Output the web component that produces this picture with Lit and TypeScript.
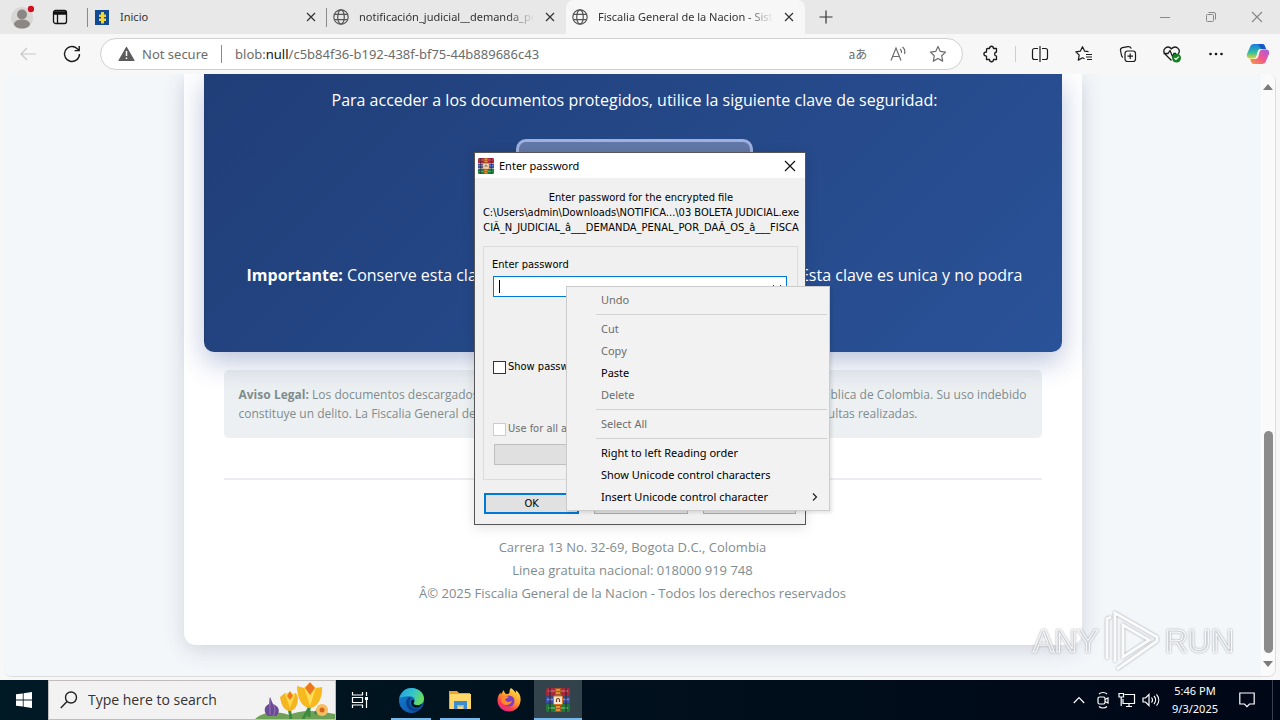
import { LitElement, html, css, svg } from "lit";
import { customElement } from "lit/decorators.js";

const closeIcon = html`<svg width="16" height="16" viewBox="0 0 16 16" fill="none" stroke="currentColor" stroke-width="1.2"><path d="M4 4l8 8M12 4l-8 8"/></svg>`;
const globeIcon = html`<svg width="16" height="16" viewBox="0 0 16 16" fill="none" stroke="#555" stroke-width="1.2"><circle cx="8" cy="8" r="7.2"/><ellipse cx="8" cy="8" rx="3.3" ry="7.2"/><path d="M1.5 5.3h13M1.5 10.7h13"/></svg>`;
const winrarShapes = svg`
  <path d="M1 0h22l1 2v5l-1 1H1L0 7V2z" fill="#a8283c"/><path d="M2 3h20" stroke="#d9606c" stroke-width="1.500"/>
  <path d="M0 8.500h24v7H0z" fill="#3b4fa8"/><path d="M1 11.500h22" stroke="#7f93d8" stroke-width="1.500"/>
  <path d="M1 16h22l1 1v5l-1 2H1l-1-2v-5z" fill="#1d7a38"/><path d="M2 20h20" stroke="#5cb85f" stroke-width="1.500"/>
  <path d="M4 0v24M20 0v24" stroke="#2c2430" stroke-width="1"/>
  <rect x="9" y="0" width="6" height="24" fill="#a85a22"/><path d="M10 2h4M10 5h4M10 19h4M10 22h4" stroke="#f0a83b" stroke-width="1.600"/>
  <rect x="7.500" y="8" width="9" height="8.500" rx="1" fill="#f4e9d8" stroke="#d9701c" stroke-width="1"/><path d="M10.500 14v-2a1.500 1.500 0 0 1 3 0v2" fill="none" stroke="#7a3a18" stroke-width="1.200"/>`;
const winrar = (s: number) => html`<svg width=${s} height=${s} viewBox="0 0 24 24">${winrarShapes}</svg>`;

@customElement("browser-tabs")
class BrowserTabs extends LitElement {
  static styles = css`
    :host { display: flex; height: 34px; background: #e8e8e8; color: #333; font: 11px/16px "Noto Sans", "Open Sans", sans-serif; }
    button { border: 0; padding: 0; background: none; font: inherit; color: inherit; display: grid; place-items: center; }
    svg { display: block; }
    .lead { flex: 0 0 88px; display: flex; align-items: center; padding-left: 10px; gap: 18px; box-sizing: border-box; border-right: 1px solid transparent; }
    .tab { flex: 0 1 239px; min-width: 60px; box-sizing: border-box; display: flex; align-items: center; gap: 10px; padding: 0 8px 0 6px; position: relative; }
    .ruled::before { content: ""; position: absolute; left: -1px; top: 8px; height: 19px; width: 1px; background: #8b8b8b; }
    .active { background: #f7f7f7; border-radius: 8px 8px 0 0; }
    .label { flex: 1; overflow: hidden; white-space: nowrap; margin-right: -4px; }
    .faded { mask-image: linear-gradient(90deg, #000 84%, transparent 99%); }
    .add { width: 42px; }
    .spacer { flex: 1; }
    .win { width: 46px; color: #888; }
  `;
  render() {
    return html`
      <div class="lead">
        <button aria-label="Profile"><svg width="24" height="26" viewBox="0 0 24 26"><circle cx="12" cy="14" r="11" fill="#d9d7d5"/><circle cx="12" cy="10.500" r="5" fill="#8b8785"/><ellipse cx="12" cy="20" rx="8" ry="4.500" fill="#8b8785"/><circle cx="21" cy="5" r="3.200" fill="#d10f20"/></svg></button>
        <button aria-label="Tab actions"><svg width="16" height="16" viewBox="0 0 16 16" fill="none" stroke="#111" stroke-width="1.300"><rect x="1.500" y="1.500" width="13" height="13" rx="2"/><path d="M2 4h12" stroke-width="3.500"/><path d="M5.500 5v9"/></svg></button>
      </div>
      <div class="tab ruled">
        <svg width="16" height="16" viewBox="0 0 16 16"><rect x="1" y="1" width="14" height="15" fill="#114a94"/><path d="M7 3h3v2.500h2V8h-2v1.500h2V12h-2v2.500H7V12H5V9.500h2V8H5V5.500h2z" fill="#f1d335"/></svg>
        <span class="label">Inicio</span><button aria-label="Close Inicio">${closeIcon}</button>
      </div>
      <div class="tab ruled">${globeIcon}<span class="label faded">notificación_judicial__demanda_penal</span><button aria-label="Close tab">${closeIcon}</button></div>
      <div class="tab active">${globeIcon}<span class="label faded">Fiscalia General de la Nacion - Sistema</span><button aria-label="Close tab">${closeIcon}</button></div>
      <button class="add" aria-label="New tab"><svg width="16" height="16" viewBox="0 0 16 16" stroke="#333" stroke-width="1.200"><path d="M8 1.500v13M1.500 8h13"/></svg></button>
      <span class="spacer"></span>
      <button class="win" aria-label="Minimize"><svg width="12" height="12" viewBox="0 0 12 12" stroke="currentColor"><path d="M1 6.500h10"/></svg></button>
      <button class="win" aria-label="Restore"><svg width="12" height="12" viewBox="0 0 12 12" fill="none" stroke="currentColor"><rect x="1.500" y="3.500" width="7" height="7" rx="1"/><path d="M3.500 1.500H9a1.500 1.500 0 0 1 1.500 1.500v5.500"/></svg></button>
      <button class="win" aria-label="Close"><svg width="12" height="12" viewBox="0 0 12 12" stroke="currentColor" stroke-width="1.200"><path d="M1 1l10 10M11 1L1 11"/></svg></button>
    `;
  }
}

@customElement("browser-toolbar")
class BrowserToolbar extends LitElement {
  static styles = css`
    :host { display: flex; align-items: center; height: 40px; background: #f7f7f7; color: #1b1b1b; font: 13px/20px "Noto Sans", "Open Sans", sans-serif; padding: 0 2px 0 6px; }
    button { border: 0; padding: 0; background: none; color: inherit; font: inherit; display: grid; place-items: center; width: 44px; height: 32px; flex: none; }
    svg { display: block; fill: none; stroke: currentColor; stroke-width: 1.200; }
    .pill { flex: 1; display: flex; align-items: center; margin-left: 6px; height: 32px; box-sizing: border-box; border: 1px solid #d0d0d0; border-radius: 16px; background: #fff; padding: 0 4px 0 17px; color: #6c6c6c; }
    .pill button { width: 40px; }
    .status { margin-left: 7px; }
    .rule { width: 1px; height: 18px; background: #8b8b8b; margin: 0 13px; }
    .url { flex: 1; white-space: nowrap; overflow: hidden; }
    .url b { font-weight: 400; color: #111; }
    .puzzle { width: 48px; margin-left: 4px; }
    .thin { width: 1px; height: 16px; background: #cfcfcf; margin-right: 2px; }
    .aa { font: 12px/16px "Noto Sans CJK JP", sans-serif; }
    .back { color: #c8c8c8; }
    .copilot { width: 40px; }
  `;
  render() {
    return html`
      <button class="back" aria-label="Back"><svg width="18" height="18" viewBox="0 0 18 18"><path d="M17 9H2M8 3L2 9l6 6"/></svg></button>
      <button aria-label="Refresh"><svg width="20" height="20" viewBox="0 0 20 20"><path d="M17.500 10A7.500 7.500 0 1 1 15 4.400l2 2M17.200 2v4.600h-4.600" stroke-width="1.400"/></svg></button>
      <div class="pill">
        <svg width="17" height="16" viewBox="0 0 17 16"><path d="M8.500 1.500L16 14.500H1z" fill="#5c5c5c" stroke="#5c5c5c" stroke-linejoin="round"/><path d="M8.500 5v5M8.500 11.500v1.500" stroke="#fff" stroke-width="1.500"/></svg>
        <span class="status">Not secure</span><span class="rule"></span>
        <span class="url">blob:<b>null</b>/c5b84f36-b192-438f-bf75-44b889686c43</span>
        <button class="aa" aria-label="Translate">aあ</button>
        <button aria-label="Read aloud"><svg width="18" height="18" viewBox="0 0 18 18"><path d="M2 15.500L7 3l5 12.500M3.800 11.500h6.500M11 4c1.500 1 1.800 2.500 1.500 4M13.500 2c2.200 1.800 2.700 4.500 2 7"/></svg></button>
        <button aria-label="Add to favorites"><svg width="18" height="18" viewBox="0 0 18 18"><path d="M9 1.500l2.300 4.900 5.300.7-3.900 3.700 1 5.300L9 13.500l-4.700 2.600 1-5.300L1.400 7.100l5.300-.7z" stroke-linejoin="round"/></svg></button>
      </div>
      <button class="puzzle" aria-label="Extensions"><svg width="18" height="18" viewBox="0 0 18 18"><path d="M5.500 3.500H7.500c0-3 4-3 4 0H14.500v3.500c-2.500.2-2.500 4 0 4.200v3.300h-3c0 3-4 3-4 0H4.500v-3.300c-3.500 0-3.500-4.200 0-4.200V4.500c0-.6.400-1 1-1z" stroke-linejoin="round" stroke-width="1.300"/></svg></button>
      <span class="thin"></span>
      <button aria-label="Split screen"><svg width="18" height="18" viewBox="0 0 18 18"><path d="M7 3.500H3.500a2 2 0 0 0-2 2v7a2 2 0 0 0 2 2H7M11 3.500h3.500a2 2 0 0 1 2 2v7a2 2 0 0 1-2 2H11M9 1v16"/></svg></button>
      <button aria-label="Favorites"><svg width="18" height="18" viewBox="0 0 18 18"><path d="M13.500 6.700L9.700 6.200 7.500 1.700 5.300 6.200l-4.500.6 3.400 3.300-.9 5 4.200-2.300 2 1M11 9.500h6M11 12h6M12 14.500h5" stroke-linejoin="round"/></svg></button>
      <button aria-label="Collections"><svg width="18" height="18" viewBox="0 0 18 18"><rect x="6" y="6" width="10.500" height="10.500" rx="2.500"/><path d="M11.200 8.500v5.500M8.500 11.200H14M4 12.500C2.500 12 2.500 10.500 2.200 9L1.500 5.500C1.200 3.800 2 3 3.500 2.700L9 1.700c1.800-.3 2.900.3 3.300 2"/></svg></button>
      <button aria-label="Browser essentials"><svg width="20" height="18" viewBox="0 0 20 18"><path d="M9.500 15.500L3 9C-.5 4.500 5.500-.5 9.500 3.800c4-4.300 10 .5 6.800 5M1.500 8.500H6l2-3 2.500 6L12 8.500h2" stroke-width="1.300"/><circle cx="14.500" cy="13" r="4.500" fill="#168021" stroke="none"/><path d="M12.500 13l1.500 1.500 2.700-2.800" stroke="#fff"/></svg></button>
      <button aria-label="Settings and more"><svg width="16" height="16" viewBox="0 0 16 16"><g fill="#111" stroke="none"><circle cx="2.500" cy="8" r="1.300"/><circle cx="8" cy="8" r="1.300"/><circle cx="13.500" cy="8" r="1.300"/></g></svg></button>
      <button class="copilot" aria-label="Copilot"><svg width="24" height="24" viewBox="0 0 24 24" stroke="none"><defs><linearGradient id="a" x1="0" y1="0" x2="0" y2="1"><stop stop-color="#1a7be0"/><stop offset=".6" stop-color="#35bfa0"/><stop offset="1" stop-color="#e8d52a"/></linearGradient><linearGradient id="b" x1="1" y1="0" x2="0" y2="1"><stop stop-color="#a35bea"/><stop offset=".5" stop-color="#f0588d"/><stop offset="1" stop-color="#f79a3c"/></linearGradient></defs><g stroke="none"><path d="M8 2h8c2 0 2.500 1 3 2.500L20 7h-5c-2 0-3 1-3.500 3l-1 4c-.5 1.500-1.500 2.500-3 2.500H4c-3 0-3.500-2.500-3-4.500L4 5c.6-2 2-3 4-3z" fill="url(#a)"/><path d="M16 22H8c-2 0-2.500-1-3-2.500L4.300 17H9c2 0 3-1 3.500-3l1-4c.5-1.500 1.500-2.500 3-2.500H20c3 0 3.500 2.500 3 4.500l-3 7c-.6 2-2 3-4 3z" fill="url(#b)"/><path d="M12 2h4c2 0 2.500 1 3 2.500L20 7h-5z" fill="#1659c7"/></g></svg></button>
    `;
  }
}

@customElement("judicial-page")
class JudicialPage extends LitElement {
  static styles = css`
    :host { flex: 1; min-height: 0; display: flex; isolation: isolate; margin: 0 4px 3px; border: 1px solid #dcdcdc; border-width: 0 1px 1px 0; border-radius: 8px; overflow: hidden; background: #f4f7fa; font: 16px/24px "Open Sans", "Noto Sans", sans-serif; }
    .scroll { flex: 1; min-width: 0; overflow: hidden; background: #f4f7fa; }
    .sheet { max-width: 898px; margin: 0 auto; box-sizing: border-box; background: #fff; border-radius: 0 0 12px 12px; padding: 0 20px 40px; box-shadow: 0 5px 22px rgba(30, 40, 70, .16); color: #7f8c8d; }
    .key { position: relative; z-index: 1; height: 278px; box-sizing: border-box; background: linear-gradient(135deg, #203e78, #2a5298); color: #fff; border-radius: 0 0 10px 10px; border-left: 1px solid #1e3c72; box-shadow: 0 10px 28px rgba(30, 60, 140, .3); text-align: center; padding: 14px 0 0 3px; }
    p { margin: 0; }
    .code { width: 237px; height: 66px; margin: 27px auto 58px; box-sizing: border-box; border: 3px solid #9fb0de; border-radius: 10px; background: #6278a8; }
    .note { display: flex; justify-content: space-between; padding: 0 39px; white-space: nowrap; }
    .legal { margin: 18px 20px 40px; background: #edf0f2; border-radius: 5px; padding: 15px; font-size: 12px; line-height: 19px; }
    .legal .full { text-align-last: justify; white-space: nowrap; }
    .legal .part { display: flex; justify-content: space-between; padding-right: 109px; white-space: nowrap; }
    .foot { margin: 0 20px; border-top: 2px solid #ecedf0; padding-top: 56px; text-align: center; font-size: 13px; line-height: 23px; }
    .bar { flex: 0 0 14px; background: #fafafa; display: flex; flex-direction: column; align-items: center; padding: 10px 0 9px; box-sizing: border-box; }
    .up, .down { border: 5px solid transparent; }
    .up { border-bottom: 6px solid #7b7b7b; border-top: 0; }
    .down { border-top: 6px solid #7b7b7b; border-bottom: 0; }
    .thumb { width: 9px; flex: 0 0 222px; border-radius: 5px; background: #8b8b8b; margin: auto 0 8px; }
  `;
  render() {
    return html`
      <div class="scroll"><main class="sheet">
        <section class="key">
          <p>Para acceder a los documentos protegidos, utilice la siguiente clave de seguridad:</p>
          <div class="code"></div>
          <p class="note"><span><strong>Importante:</strong> Conserve esta clave en lugar seguro.</span><span>Esta clave es unica y no podra</span></p>
        </section>
        <section class="legal">
          <p class="full"><strong>Aviso Legal:</strong> Los documentos descargados de este portal son propiedad exclusiva del Estado y de la Republica de Colombia. Su uso indebido</p>
          <p class="part"><span>constituye un delito. La Fiscalia General de la Nacion</span><span>auditara las consultas realizadas.</span></p>
        </section>
        <footer class="foot">
          <p>Carrera 13 No. 32-69, Bogota D.C., Colombia</p>
          <p>Linea gratuita nacional: 018000 919 748</p>
          <p>Â© 2025 Fiscalia General de la Nacion - Todos los derechos reservados</p>
        </footer>
      </main></div>
      <div class="bar"><span class="up"></span><span class="thumb"></span><span class="down"></span></div>
    `;
  }
}

@customElement("password-dialog")
class PasswordDialog extends LitElement {
  static styles = css`
    :host { display: flex; flex-direction: column; width: 332px; height: 373px; box-sizing: border-box; border: 1px solid #565656; background: #f0f0f0; color: #000; font: 11px/14px "DejaVu Sans Condensed", "Noto Sans", sans-serif; box-shadow: 0 2px 12px rgba(0, 0, 0, .12); }
    .title { display: flex; align-items: center; height: 25px; background: #fff; padding: 0 7px 0 3px; gap: 5px; font-family: "Noto Sans", sans-serif; }
    .title span { flex: 1; }
    button { font: inherit; box-sizing: border-box; height: 21px; padding: 0; border: 1px solid #adadad; background: #e1e1e1; }
    .x { border: 0; background: none; height: 16px; }
    svg { display: block; }
    .message { margin: 12px 1px 0 3px; white-space: nowrap; overflow: hidden; line-height: 15px; display: flex; flex-direction: column; align-items: center; }
    fieldset { margin: 11px 7px 0 8px; border: 1px solid #dcdcdc; padding: 11px 10px 14px 8px; display: flex; flex-direction: column; height: 234px; box-sizing: border-box; min-width: 0; }
    .combo { display: flex; align-items: center; height: 21px; box-sizing: border-box; border: 1px solid #0078d7; background: #fff; margin: 4px 0 0 1px; padding: 0 3px 0 5px; }
    .caret { width: 1px; height: 13px; background: #000; }
    .combo input { flex: 1; border: 0; outline: 0; padding: 0; min-width: 0; font: inherit; }
    .check { display: flex; align-items: center; gap: 2px; height: 14px; margin-left: 1px; }
    .check input { appearance: none; width: 13px; height: 13px; margin: 0; box-sizing: border-box; border: 1px solid #333; background: #fff; }
    .show { margin-top: 63px; }
    .all { margin-top: 48px; color: #6d6d6d; }
    .all input { border-color: #ccc; }
    .organize { margin: 8px 0 0 2px; border-color: #bfbfbf; background: #e0e0e0; flex: none; }
    .actions { display: flex; gap: 15px; padding: 13px 9px 0; }
    .actions button { flex: 1; }
    .actions .ok { border: 2px solid #0078d7; }
  `;
  render() {
    return html`
      <div class="title">${winrar(16)}<span>Enter password</span><button class="x" aria-label="Close"><svg width="16" height="16" viewBox="0 0 16 16" stroke="#111" stroke-width="1.200"><path d="M3 3l10 10M13 3L3 13"/></svg></button></div>
      <div class="message"><span>Enter password for the encrypted file</span><span>C:\\Users\\admin\\Downloads\\NOTIFICA...\\03 BOLETA JUDICIAL.exe</span><span>CIÃ_N_JUDICIAL_â___DEMANDA_PENAL_POR_DAÃ_OS_â___FISCA</span></div>
      <fieldset>
        <label for="pw">Enter password</label>
        <div class="combo"><span class="caret"></span><input id="pw" type="password"><svg width="12" height="8" viewBox="0 0 12 8" fill="none" stroke="#444"><path d="M2 2l4 4 4-4"/></svg></div>
        <label class="check show"><input type="checkbox">Show password</label>
        <label class="check all"><input type="checkbox" disabled>Use for all archives</label>
        <button class="organize" disabled aria-label="Organize passwords"></button>
      </fieldset>
      <div class="actions"><button class="ok">OK</button><button aria-label="Cancel"></button><button aria-label="Help"></button></div>
    `;
  }
}

@customElement("edit-menu")
class EditMenu extends LitElement {
  static groups = [
    [["Undo", false]],
    [["Cut", false], ["Copy", false], ["Paste", true], ["Delete", false]],
    [["Select All", false]],
    [["Right to left Reading order", true], ["Show Unicode control characters", true], ["Insert Unicode control character", true]],
  ] as [string, boolean][][];
  static styles = css`
    :host { display: block; width: 264px; box-sizing: border-box; border: 1px solid #ccc; background: #f2f2f2; padding: 2px; font: 11px/22px "Noto Sans", "Open Sans", sans-serif; box-shadow: 2px 2px 3px rgba(0, 0, 0, .1); }
    button { display: flex; align-items: center; justify-content: space-between; width: 100%; height: 22px; border: 0; background: none; padding: 0 9px 0 32px; font: inherit; color: #000; text-align: left; }
    button:disabled { color: #6d6d6d; }
    hr { margin: 3px 0 3px 27px; border: 0; height: 1px; background: #d2d2d2; }
  `;
  render() {
    return EditMenu.groups.map((g, i) => html`${i ? html`<hr>` : ""}${g.map(([t, on]) => html`<button ?disabled=${!on}>${t}${t.startsWith("Insert") ? html`<svg width="6" height="8" viewBox="0 0 6 8" fill="none" stroke="#222" stroke-width="1.200"><path d="M1 .5L4.500 4 1 7.500"/></svg>` : ""}</button>`)}`);
  }
}

@customElement("task-bar")
class TaskBar extends LitElement {
  static styles = css`
    :host { display: flex; height: 40px; background: linear-gradient(90deg, #001a25, #00101c 50%, #000717); color: #fff; font: 11px/18px "Noto Sans", "Open Sans", sans-serif; }
    button { border: 0; padding: 0; background: none; color: inherit; font: inherit; display: grid; place-items: center; flex: none; }
    svg { display: block; }
    .start { width: 48px; }
    .search { flex: 0 0 288px; min-width: 0; display: flex; align-items: center; box-sizing: border-box; background: #f2f2f2; border: 1px solid #bdbdbd; padding-left: 11px; }
    .search input { flex: 1; min-width: 0; margin-left: 10px; border: 0; outline: 0; padding: 0; background: none; font: 14px/20px "Open Sans", sans-serif; }
    .search input::placeholder { color: #333; opacity: 1; }
    .view { width: 47px; }
    .apps { display: flex; gap: 1px; margin-left: 4px; }
    .apps button { width: 48px; height: 40px; }
    .running { background: linear-gradient(#76b9ed, #76b9ed) 50% 100% / 40px 2px no-repeat; }
    .apps .current { background: linear-gradient(#76b9ed, #76b9ed) 50% 100% / 100% 2px no-repeat #33434c; }
    .tray { margin-left: auto; display: flex; align-items: center; }
    .tray button { width: 24px; height: 40px; }
    .tray .clock { width: 64px; text-align: center; display: block; }
    .tray .notes { width: 40px; }
    .edge { width: 8px; align-self: stretch; box-sizing: border-box; margin-left: 5px; border-left: 1px solid #34404c; }
  `;
  render() {
    return html`
      <button class="start" aria-label="Start"><svg width="16" height="16" viewBox="0 0 16 16" fill="#fff"><path d="M0 2.300L6.800 1.400v6.200H0zM7.600 1.200L16 0v7.600H7.600zM0 8.400h6.800v6.200L0 13.700zM7.600 8.400H16V16l-8.400-1.200z"/></svg></button>
      <div class="search">
        <svg width="18" height="18" viewBox="0 0 18 18" fill="none" stroke="#222" stroke-width="1.400"><circle cx="11" cy="6.500" r="5.500"/><path d="M7 10.500L.8 17"/></svg>
        <input aria-label="Search" placeholder="Type here to search">
        <svg width="80" height="38" viewBox="0 0 80 38">
          <path d="M0 38c10-8 22-8 34-4 12-5 25-5 46-1v5z" fill="#6fa058"/>
          <path d="M36 38l-2-12M54 36V22M48 38l9-16M60 33l6-8" stroke="#3e8b3f" stroke-width="3"/>
          <path d="M15 16l3 7c6 2 8 8 3 12h-8c-5-4-4-10 1-12z" fill="#6a4a94"/><path d="M15 17v17M18 23c3 4 2 9 0 12" stroke="#9877bb" fill="none"/>
          <path d="M25 16l5-4 5 2 6-2 2 5c0 8-4 13-8 13-6 0-9-7-10-14z" fill="#f5b521"/><path d="M30 13l5 14 5-13-5-3z" fill="#ffd84c"/><path d="M32 15l3-5 3 5-3 4z" fill="#ee7c1d"/>
          <path d="M42 5l7 2 6-5 6 5 6-1c1 11-5 21-12 21-8 0-13-10-13-22z" fill="#f6b91e"/><path d="M49 6l6 19 6-18-6-4z" fill="#ffdd55"/><path d="M50 7l5-6 5 6-5 7z" fill="#ee7620"/>
          <circle cx="67" cy="29" r="6" fill="#f6bd62"/><circle cx="67" cy="29" r="2.500" fill="#d8641c"/>
        </svg>
      </div>
      <button class="view" aria-label="Task view"><svg width="18" height="18" viewBox="0 0 18 18" fill="none" stroke="#fff" stroke-width="1.200"><path d="M1.500 1v3h10V1M1.500 17v-3h10v3M1.500 6.500h10v5h-10zM15.500 1v4M15.500 9v8"/><path d="M14 6h3v3h-3z" fill="#fff" stroke="none"/></svg></button>
      <div class="apps">
        <button class="running" aria-label="Edge"><svg width="25" height="25" viewBox="0 0 24 24"><defs><linearGradient id="e1" x1="0" y1="0" x2="1" y2=".4"><stop stop-color="#1b9de2"/><stop offset=".6" stop-color="#39c6c6"/><stop offset="1" stop-color="#66db61"/></linearGradient><linearGradient id="e2" x1="0" y1="0" x2="1" y2="1"><stop stop-color="#1583d8"/><stop offset="1" stop-color="#0d4a9c"/></linearGradient></defs><circle cx="12" cy="12" r="12" fill="url(#e2)"/><path d="M.3 10C2 3 7 0 12 0c7 0 12 5 12 10 0 4-3 6.500-6.500 6.500-2.500 0-4.200-1-3.200-2.300 2-3-0-6.200-4.300-6.200C5 8 1 9 .3 10z" fill="url(#e1)"/><path d="M9 9c-4 4-2 11 4 13 3 .8 6-.2 8-2.500-5 2-11-.5-11-6 0-2 .8-3.500 2-4-.8-.7-2-.8-3-.5z" fill="#0a3f8a"/><path d="M14.300 14.200c-1 1.300.7 2.300 3.200 2.300 2 0 4-.8 5.200-2.200-1 3-3 4.500-6 4.500-4 0-6-3-5-6.800.5-.8 2-1 2.600-.2.300.8.500 1.600 0 2.400z" fill="#001723"/></svg></button>
        <button class="running" aria-label="File Explorer"><svg width="22" height="20" viewBox="0 0 22 20"><path d="M0 1h8l2 2h11v16H0z" fill="#e7a92d"/><path d="M1 4h21v15H1z" fill="#ffd869"/><path d="M5 19v-8h13v8h-3.500v-4h-6v4z" fill="#3c8dd0"/><path d="M8.500 15h6v1.500h-6z" fill="#7cc1ee"/></svg></button>
        <button aria-label="Firefox"><svg width="24" height="24" viewBox="0 0 24 24"><defs><linearGradient id="f1" x1=".8" y1="0" x2=".2" y2="1"><stop stop-color="#ffe14d"/><stop offset=".45" stop-color="#ff9a2a"/><stop offset=".75" stop-color="#fb3b50"/><stop offset="1" stop-color="#d8259d"/></linearGradient></defs><path d="M14 0c3 2 4 4 5 5 0-1 0-2-.5-3C23 5 24 9 23.500 13c-.7 6-5.500 10.500-11.500 10.500S.5 19 .5 12.500C.5 9 2 6 3.500 4.500c0 1 .2 1.500.5 2C5 4 6 3 7 2c0 2 1 3.500 2.500 4 2 0 3-.5 3-2C12.500 2 13 1 14 0z" fill="url(#f1)"/><circle cx="12" cy="13" r="5.500" fill="#7c3fc4"/><path d="M5 9c3-2 5 0 7-.5-1 2-3 1.500-4 3 1 3 5 3 7 1-1 5-8 6-10 2-1-2-1-4 0-5.500z" fill="#ff8b2c"/></svg></button>
        <button class="current" aria-label="WinRAR">${winrar(24)}</button>
      </div>
      <div class="tray">
        <button aria-label="Hidden icons"><svg width="12" height="8" viewBox="0 0 12 8" fill="none" stroke="#fff" stroke-width="1.200"><path d="M.8 7L6 1.500 11.200 7"/></svg></button>
        <button aria-label="Camera"><svg width="16" height="18" viewBox="0 0 16 18" fill="none" stroke="#fff" stroke-width="1.200"><rect x="3" y="6" width="7" height="7" rx="1.500"/><path d="M10 8.500L13 7v5l-3-1.500M4 3c2-2 6-2 8 0M4 15.500c2 2 6 2 8 0"/></svg></button>
        <button aria-label="Network"><svg width="18" height="16" viewBox="0 0 18 16" fill="none" stroke="#fff" stroke-width="1.200"><path d="M6.500 2.500h10v9H5V7M8 14.500h6M11 12v2.500"/><path d="M1 1.500h4.500v3.500H1zM3.200 5v9"/></svg></button>
        <button aria-label="Volume"><svg width="18" height="14" viewBox="0 0 18 14" fill="none" stroke="#fff" stroke-width="1.200"><path d="M1 5h2.500L7 1.500v11L3.500 9H1zM9.500 4.500c1.200 1.500 1.200 3.500 0 5M12 3c2 2.300 2 5.700 0 8M14.500 1.300c3 3.500 3 8 0 11.400"/></svg></button>
        <button class="clock">5:46 PM<br>9/3/2025</button>
        <button class="notes" aria-label="Notifications"><svg width="16" height="16" viewBox="0 0 16 16" fill="none" stroke="#fff" stroke-width="1.200"><path d="M.8 1h14.400v11H10.500L8 14.700 5.500 12H.8z"/></svg></button>
        <span class="edge"></span>
      </div>
    `;
  }
}

@customElement("app-root")
class AppRoot extends LitElement {
  static styles = css`
    :host { display: flex; flex-direction: column; height: 100vh; position: relative; overflow: hidden; background: #f7f7f7; }
    .dialog { position: absolute; left: 474px; top: 152px; }
    .menu { position: absolute; left: 566px; top: 286px; }
    .mark { position: absolute; right: 46px; bottom: 47px; display: flex; align-items: center; gap: 4px; font: 32px/64px "Liberation Sans Narrow", "Liberation Sans", sans-serif; color: rgba(225, 228, 232, .6); -webkit-text-stroke: 1px rgba(255, 255, 255, .9); filter: drop-shadow(0 0 1px rgba(120, 125, 135, .8)); }
  `;
  render() {
    return html`
      <browser-tabs></browser-tabs>
      <browser-toolbar></browser-toolbar>
      <judicial-page></judicial-page>
      <task-bar></task-bar>
      <div class="mark"><span>ANY</span><svg width="58" height="64" viewBox="0 0 58 64" fill="none" stroke="rgba(255,255,255,.95)" stroke-width="3"><path d="M4 50V10l4-2M12 53V4l42 24v4L14 60M20 16v32l26-17z"/></svg><span>RUN</span></div>
      <password-dialog class="dialog"></password-dialog>
      <edit-menu class="menu"></edit-menu>
    `;
  }
}
